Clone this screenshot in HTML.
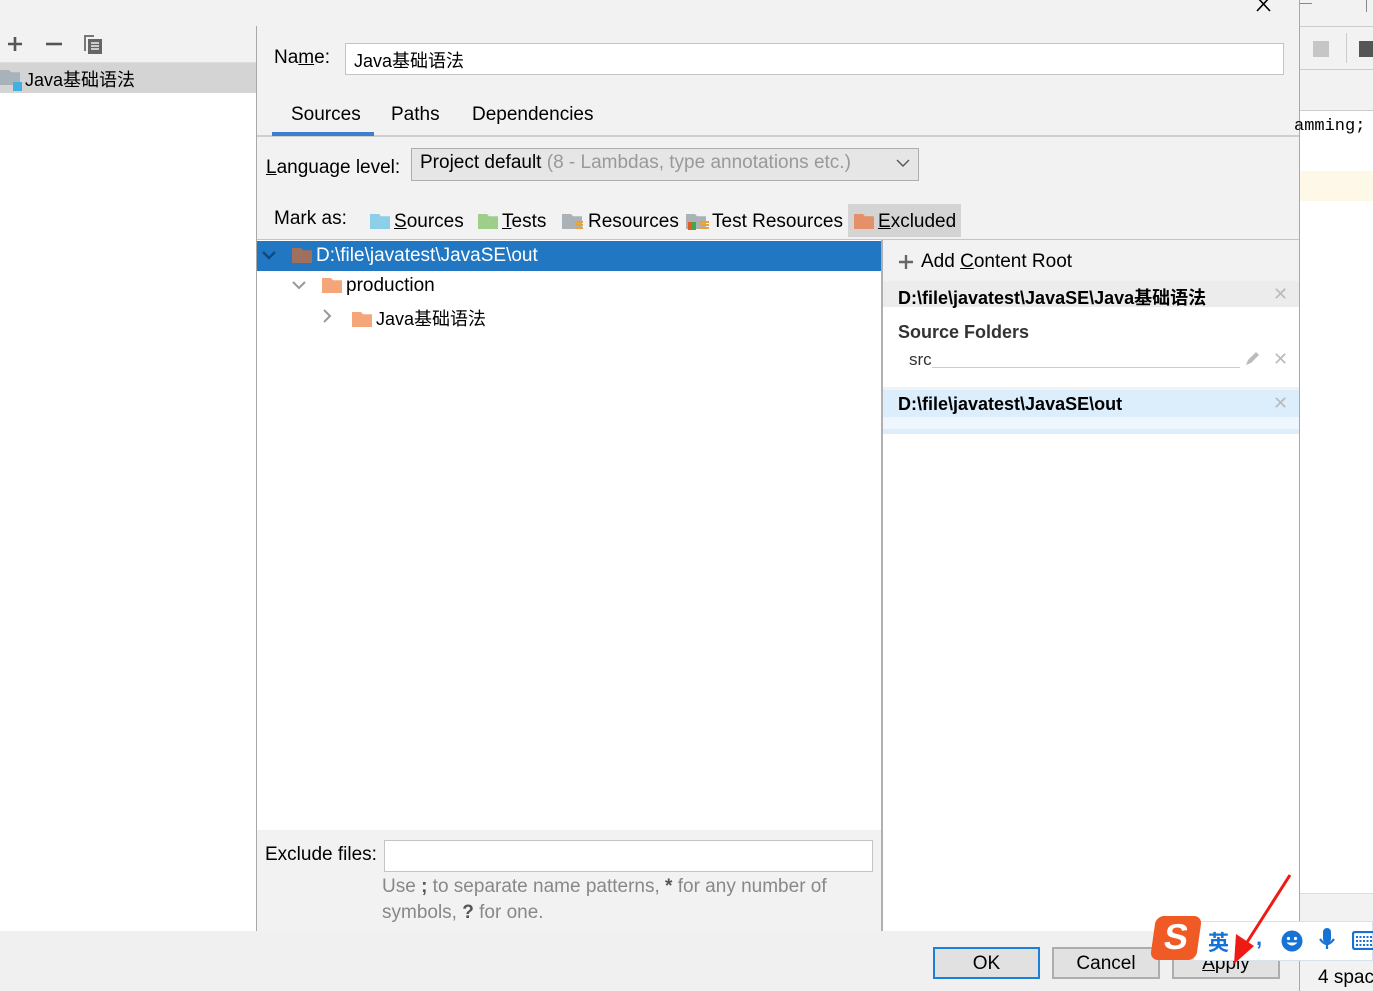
<!DOCTYPE html>
<html><head><meta charset="utf-8"><style>
*{margin:0;padding:0;box-sizing:border-box}
body{width:1373px;height:991px;position:relative;overflow:hidden;background:#f2f2f2;font-family:"Segoe UI","Liberation Sans","Noto Sans CJK SC",sans-serif;font-size:19px;color:#000}
.a{position:absolute;white-space:nowrap}
u{text-decoration:underline}
.fold{display:inline-block;width:20px;height:15px;vertical-align:-2px;margin-right:4px;clip-path:polygon(0 0,45% 0,55% 15%,100% 15%,100% 100%,0 100%)}
.btn{position:absolute;height:32px;background:#e1e1e1;border:2px solid #adadad;text-align:center;line-height:30px;font-size:19px}
.x{position:absolute;color:#bbb;font-size:18px}
</style></head><body>
<div class="a" style="left:1299px;top:0;width:74px;height:991px;background:#f2f2f2;border-left:1px solid #a8a8a8"></div>
<div class="a" style="left:1300px;top:26px;width:73px;height:1px;background:#ccc"></div>
<div class="a" style="left:1313px;top:41px;width:16px;height:16px;background:#c6c6c6"></div>
<div class="a" style="left:1346px;top:33px;width:1px;height:30px;background:#ccc"></div>
<div class="a" style="left:1359px;top:41px;width:14px;height:16px;background:#555"></div>
<div class="a" style="left:1300px;top:69px;width:73px;height:1px;background:#ccc"></div>
<div class="a" style="left:1300px;top:110px;width:73px;height:783px;background:#fff;border-top:1px solid #ccc"></div>
<div class="a" style="left:1300px;top:171px;width:73px;height:30px;background:#fdf8e8"></div>
<div class="a" style="left:1294px;top:117px;font-family:'Liberation Mono',monospace;font-size:17px">amming;</div>
<div class="a" style="left:1300px;top:893px;width:73px;height:98px;background:#f2f2f2;border-top:1px solid #ddd"></div>
<div class="a" style="left:1318px;top:967px;font-size:19px">4 spac</div>
<div class="a" style="left:1300px;top:3px;width:12px;height:1px;background:#888"></div>
<div class="a" style="left:1366px;top:0;width:1px;height:12px;background:#888"></div>
<svg class="a" style="left:1256px;top:0" width="16" height="12"><path d="M1 -3 L14 11 M14 -3 L1 11" stroke="#000" stroke-width="1.6"/></svg>

<svg class="a" style="left:6px;top:34px" width="100" height="20"><path d="M2 10h14M9 3v14" stroke="#555" stroke-width="2.6"/><path d="M40 10h16" stroke="#555" stroke-width="2.6"/><path d="M78 1h10v2h-8v14h-2z" fill="#777"/><rect x="82" y="5" width="14" height="15" fill="#666"/><path d="M85 9h8M85 12h8M85 15h8" stroke="#eee" stroke-width="1.4"/></svg>
<div class="a" style="left:0;top:62px;width:256px;height:1px;background:#ddd"></div>
<div class="a" style="left:0;top:63px;width:256px;height:30px;background:#d4d4d4"></div>
<div class="a" style="left:0;top:70px;width:20px;height:15px;background:#a8b2ba;clip-path:polygon(0 0,45% 0,55% 15%,100% 15%,100% 100%,0 100%)"></div>
<div class="a" style="left:13px;top:82px;width:9px;height:9px;background:#3fb0e0"></div>
<div class="a" style="left:25px;top:66px;font-size:18px">Java基础语法</div>
<div class="a" style="left:0;top:93px;width:256px;height:838px;background:#fff"></div>
<div class="a" style="left:256px;top:26px;width:1px;height:905px;background:#a8a8a8"></div>

<div class="a" style="left:274px;top:47px">Na<u>m</u>e:</div>
<div class="a" style="left:345px;top:43px;width:939px;height:32px;background:#fff;border:1px solid #c4c4c4;padding:3px 8px;font-size:18px">Java基础语法</div>
<div class="a" style="left:291px;top:104px">Sources</div>
<div class="a" style="left:391px;top:104px">Paths</div>
<div class="a" style="left:472px;top:104px">Dependencies</div>
<div class="a" style="left:257px;top:135px;width:1042px;height:2px;background:#cfcfcf"></div>
<div class="a" style="left:272px;top:132px;width:102px;height:4px;background:#3d7fcc"></div>
<div class="a" style="left:266px;top:157px"><u>L</u>anguage level:</div>
<div class="a" style="left:411px;top:148px;width:508px;height:33px;background:#e6e6e6;border:1px solid #adadad;padding:3px 8px">Project default <span style="color:#999">(8 - Lambdas, type annotations etc.)</span></div>
<svg class="a" style="left:896px;top:158px" width="14" height="10"><path d="M1 2l6 6 6-6" stroke="#555" fill="none" stroke-width="1.4"/></svg>
<div class="a" style="left:848px;top:204px;width:113px;height:33px;background:#d4d4d4"></div>
<div class="a" style="left:274px;top:208px">Mark as:</div>
<div class="a" style="left:370px;top:211px"><span class="fold" style="background:#8dcfe9"></span><u>S</u>ources</div>
<div class="a" style="left:478px;top:211px"><span class="fold" style="background:#9ecf8a"></span><u>T</u>ests</div>
<div class="a" style="left:562px;top:211px"><span class="fold" style="background:#aab2b8;margin-right:6px"></span>Resources</div>
<div class="a" style="left:576px;top:221px;width:7px;height:9px;background:repeating-linear-gradient(#e6a23c 0 2px,transparent 2px 3px)"></div>
<div class="a" style="left:686px;top:211px"><span class="fold" style="background:#aab2b8;margin-right:6px"></span>Test Resources</div>
<div class="a" style="left:700px;top:221px;width:9px;height:9px;background:repeating-linear-gradient(#e6a23c 0 2px,transparent 2px 3px)"></div>
<div class="a" style="left:688px;top:222px;width:5px;height:8px;background:#e05a2a"></div>
<div class="a" style="left:692px;top:222px;width:4px;height:8px;background:#45a845"></div>
<div class="a" style="left:854px;top:211px"><span class="fold" style="background:#e4906a"></span><u>E</u>xcluded</div>
<div class="a" style="left:257px;top:239px;width:1042px;height:1px;background:#c4c4c4"></div>

<div class="a" style="left:257px;top:240px;width:624px;height:590px;background:#fff"></div>
<div class="a" style="left:257px;top:241px;width:624px;height:30px;background:#2277c3"></div>
<svg class="a" style="left:262px;top:251px" width="14" height="10"><path d="M1 1l6 6 6-6" stroke="#0d4a80" fill="none" stroke-width="2.4"/></svg>
<div class="a" style="left:292px;top:245px;color:#fff"><span class="fold" style="background:#a0705f"></span>D:\file\javatest\JavaSE\out</div>
<svg class="a" style="left:292px;top:281px" width="14" height="10"><path d="M1 1l6 6 6-6" stroke="#999" fill="none" stroke-width="2"/></svg>
<div class="a" style="left:322px;top:275px"><span class="fold" style="background:#f4a57a"></span>production</div>
<svg class="a" style="left:323px;top:309px" width="10" height="14"><path d="M1 1l6 6-6 6" stroke="#999" fill="none" stroke-width="2"/></svg>
<div class="a" style="left:352px;top:305px;font-size:18px"><span class="fold" style="background:#f4a57a"></span>Java基础语法</div>
<div class="a" style="left:881px;top:240px;width:2px;height:691px;background:#b0b0b0"></div>

<div class="a" style="left:265px;top:844px">Exclude files:</div>
<div class="a" style="left:384px;top:840px;width:489px;height:32px;background:#fff;border:1px solid #c4c4c4"></div>
<div class="a" style="left:382px;top:874px;color:#888;line-height:26px;white-space:normal;width:490px">Use <b style="color:#555">;</b> to separate name patterns, <b style="color:#555">*</b> for any number of symbols, <b style="color:#555">?</b> for one.</div>

<div class="a" style="left:883px;top:240px;width:416px;height:691px;background:#fff"></div>
<div class="a" style="left:883px;top:240px;width:416px;height:67px;background:#f2f2f2"></div>
<div class="a" style="left:883px;top:281px;width:416px;height:26px;background:#ececec"></div>
<svg class="a" style="left:898px;top:254px" width="16" height="16"><path d="M1 8h14M8 1v14" stroke="#666" stroke-width="2.4"/></svg>
<div class="a" style="left:921px;top:251px">Add <u>C</u>ontent Root</div>
<div class="a" style="left:898px;top:284px;font-weight:bold;font-size:18px">D:\file\javatest\JavaSE\Java基础语法</div>
<div class="x" style="left:1273px;top:284px">✕</div>
<div class="a" style="left:898px;top:322px;font-weight:bold;color:#333;font-size:18px">Source Folders</div>
<div class="a" style="left:909px;top:350px;font-size:17px;color:#333">src</div>
<div class="a" style="left:932px;top:367px;width:308px;height:1px;background:#ccc"></div>
<svg class="a" style="left:1243px;top:350px" width="18" height="18"><path d="M3 15l2-5 8-8 3 3-8 8z" fill="#bbb"/></svg>
<div class="x" style="left:1273px;top:349px">✕</div>
<div class="a" style="left:883px;top:387px;width:416px;height:3px;background:#f2f2f2"></div>
<div class="a" style="left:883px;top:390px;width:416px;height:27px;background:#dcedfb"></div>
<div class="a" style="left:883px;top:417px;width:416px;height:12px;background:#eff6fe"></div>
<div class="a" style="left:883px;top:429px;width:416px;height:5px;background:#dcedfb"></div>
<div class="a" style="left:898px;top:394px;font-weight:bold;font-size:18px">D:\file\javatest\JavaSE\out</div>
<div class="x" style="left:1273px;top:393px">✕</div>

<div class="a" style="left:0;top:931px;width:1299px;height:60px;background:#f0f0f0"></div>
<div class="btn" style="left:933px;top:947px;width:107px;border-color:#1b80d8">OK</div>
<div class="btn" style="left:1052px;top:947px;width:108px">Cancel</div>
<div class="btn" style="left:1172px;top:947px;width:108px"><u>A</u>pply</div>

<div class="a" style="left:1193px;top:921px;width:180px;height:40px;background:#fff;border:1px solid #d8e2ee"></div>
<div class="a" style="left:1153px;top:916px;width:46px;height:44px;background:#f05a24;border-radius:8px;transform:skewX(-8deg);color:#fff;font-weight:bold;font-size:36px;text-align:center;line-height:42px">S</div>
<div class="a" style="left:1208px;top:927px;color:#1772d6;font-weight:bold;font-size:21px">英</div>
<div class="a" style="left:1256px;top:925px;color:#1772d6;font-weight:bold;font-size:22px">,</div>
<svg class="a" style="left:1281px;top:930px" width="22" height="22"><circle cx="11" cy="11" r="10.5" fill="#1772d6"/><circle cx="7.5" cy="8.5" r="1.6" fill="#fff"/><circle cx="14.5" cy="8.5" r="1.6" fill="#fff"/><path d="M5.5 12.5q5.5 6 11 0z" fill="#fff"/></svg>
<svg class="a" style="left:1318px;top:927px" width="18" height="26"><rect x="5" y="1" width="8" height="15" rx="4" fill="#1772d6"/><path d="M2 12q7 10 14 0M9 18v4" stroke="#1772d6" stroke-width="2.2" fill="none"/></svg>
<svg class="a" style="left:1352px;top:931px" width="21" height="19"><rect x="1" y="1" width="24" height="17" rx="2" fill="none" stroke="#1772d6" stroke-width="2.2"/><path d="M4 6h18M4 10h18M4 14h18" stroke="#1772d6" stroke-width="2" stroke-dasharray="2 1.5"/></svg>
<svg class="a" style="left:1220px;top:870px" width="80" height="100"><path d="M70 5L24 77" stroke="#f01a14" stroke-width="3"/><path d="M14 94L16 64L34 76z" fill="#f01a14"/></svg>
</body></html>
